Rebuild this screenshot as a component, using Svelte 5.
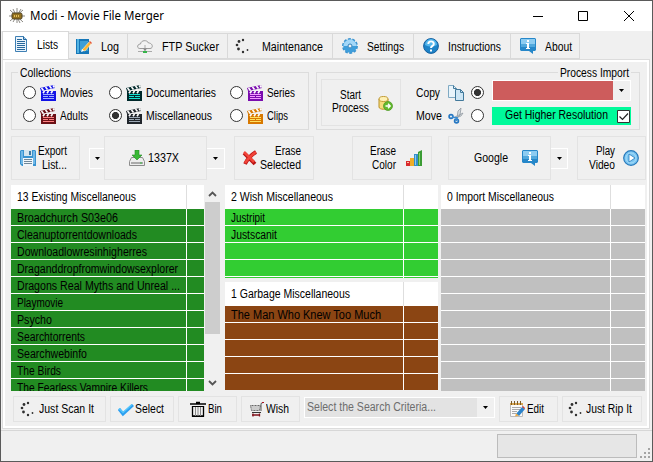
<script>
  const tabs = [
    ['Lists', 'doc', 21], ['Log', 'log', 18], ['FTP Sucker', 'cloud', 57], ['Maintenance', 'dots', 61],
    ['Settings', 'gear', 37], ['Instructions', 'help', 53], ['About', 'info', 27]
  ];
  const collections = [
    ['Movies', 33, '#1212e6', '#a0b0ff'], ['Documentaries', 70, '#00282a', '#14e0d4'], ['Series', 28, '#7a0cae', '#f59aff'],
    ['Adults', 28, '#6b1015', '#ff8080'], ['Miscellaneous', 66, '#20252b', '#9ca8b5'], ['Clips', 21, '#d87800', '#ffe060']
  ];
  const existing = [
    ['Broadchurch S03e06', 101], ['Cleanuptorrentdownloads', 120], ['Downloadlowresinhigherres', 130],
    ['Draganddropfromwindowsexplorer', 161], ['Dragons Real Myths and Unreal ...', 163], ['Playmovie', 46],
    ['Psycho', 35], ['Searchtorrents', 68], ['Searchwebinfo', 70], ['The Birds', 44], ['The Fearless Vampire Killers', 131]
  ];
  const pad = (rows, n) => [...rows, ...Array(n - rows.length).fill(['', 0])];
  const wish = pad([['Justripit', 34], ['Justscanit', 46]], 5);
  const garbage = pad([['The Man Who Knew Too Much', 150]], 5);
  const incoming = pad([], 11);

  // Condenses a label horizontally so that it fills its given width.
  function fit(node, w) {
    const natural = node.getBoundingClientRect().width;
    if (natural) node.style.transform = `scaleX(${w / natural})`;
  }
</script>

{#snippet T(text, w)}
  <span class="t" style="width:{w}px"><span class="ti" use:fit={w}>{text}</span></span>
{/snippet}

{#snippet clapper(dark, light)}
  <svg class="ic" width="16" height="16" viewBox="0 0 16 16">
    <path d="M1 6h15v10H1z" fill={dark} />
    <path d="M0 3l14-3 1 3L1 6z" fill={dark} />
    <path d="M1.500 3l2 2.500M5.500 2l2 2.500M9.500 1l2 2.500M13 .5l1.500 2" stroke="#fff" stroke-width="1.600" />
    <path d="M3 8.300l1.500-2.300M7 8.300l1.500-2.300M11 8.300l1.500-2.300" stroke="#fff" stroke-width="1.600" />
    <path d="M3 9.500h11M3 11.500h5M9 11.500h5M3 13.500h11" stroke={light} />
  </svg>
{/snippet}

{#snippet icon(name)}
  <svg class="ic" width="16" height="16" viewBox="0 0 16 16" fill="none">
    {#if name === 'app'}
      <path d="M8 0v15M1 2l13 12M14 2L1 13M0 8h16M4 1l7 14M12 1L4 14" stroke="#8b8983" />
      <rect x="3" y="5" width="10" height="6" rx="1.500" fill="#92701f" stroke="#4d4023" />
      <path d="M5 8h6" stroke="#e3bf59" stroke-dasharray="1 1" stroke-width="2" />
    {:else if name === 'doc'}
      <path d="M2.500.5h8l3 3v12h-11z" fill="#eaf4fc" stroke="#3f80b4" />
      <path d="M10.500.5v3h3" fill="#9fc9e9" stroke="#23659c" />
      <path d="M4 3.500h5M4 5.500h8M4 7.500h8M4 9.500h8M4 11.500h8M4 13.500h8" stroke="#28689b" />
    {:else if name === 'log'}
      <path d="M0 1h13v15H0z" fill="#1677b8" /><path d="M1 1h2v14H1z" fill="#54b3e2" />
      <path d="M4 3h8v10H4z" fill="#3d9fd6" />
      <path d="M6 12l7-8 2 2-6 7z" fill="#ffb52e" stroke="#fff1c4" stroke-width=".6" /><path d="M13 4l1-1 2 2-1 1z" fill="#e65536" /><path d="M5 14l1-3 2 2z" fill="#fff" />
    {:else if name === 'cloud'}
      <path d="M3 10.500C-.5 10.500 0 6 3.500 6 4 2 10 1.500 11.500 5 16 5 16.500 10.500 13 10.500z" fill="#f2f2f2" stroke="#9b9b9b" />
      <path d="M8 7v6M1 13.500h14" stroke="#aaa" /><path d="M6 10.500h4L8 13z" fill="#858585" /><path d="M6 13h4v2H6z" fill="#36b44a" />
    {:else if name === 'dots'}
      <g fill="#303030"><circle cx="8" cy="2" r="1.200" /><circle cx="4" cy="3.500" r="1.400" /><circle cx="2" cy="7" r="1.300" /><circle cx="3.500" cy="11" r="1.400" /><circle cx="8" cy="14" r="1.200" /><circle cx="12.500" cy="12" r=".9" /></g>
    {:else if name === 'gear'}
      <circle cx="8" cy="8" r="6.700" stroke="#3c93cf" stroke-width="2.500" stroke-dasharray="2.700 1.500" />
      <circle cx="8" cy="8" r="4.500" stroke="#3f9edb" stroke-width="4.500" /><path d="M1.500 8a6.500 6.500 0 0 1 13 0h-4.500a2 2 0 0 0-4 0z" fill="#a3d7f8" />
      <circle cx="8" cy="8" r="2" fill="#f0f0f0" stroke="#2b7fbb" />
    {:else if name === 'help'}
      <circle cx="8" cy="8" r="7.400" fill="#1d83c8" stroke="#155f9e" /><path d="M2 7a6 6 0 0 1 12 0q-6 3-12 0" fill="#55b7ed" />
      <path d="M5.300 6c0-3.500 5.500-3.500 5.500 0C10.800 8 8 7.800 8 10" stroke="#fff" stroke-width="1.900" /><path d="M7 11.500h2v2H7z" fill="#fff" />
    {:else if name === 'info'}
      <path d="M1 0h14l1 1v11l-1 1h-2v3l-4-3H1l-1-1V1z" fill="#2687c9" /><path d="M1 1h14v5H1z" fill="#8dccf1" /><path d="M1 6h14v3H1z" fill="#51a8dc" />
      <path d="M7 2h2v2H7zM6 5h3v5h1v1H6v-1h1V6H6z" fill="#fff" />
    {:else if name === 'db'}
      <path d="M2 4v8c0 3 9 3 9 0V4" fill="#f5dc7c" stroke="#bb9125" /><ellipse cx="6.500" cy="4" rx="4.500" ry="2.500" fill="#fff1b4" stroke="#c19a34" />
      <circle cx="11" cy="11" r="4.500" fill="#62b92e" stroke="#4a9520" stroke-width=".7" /><path d="M8.500 11h4M11 8.800l2.200 2.200-2.200 2.200" stroke="#fff" stroke-width="1.300" />
    {:else if name === 'copy'}
      <path d="M.5 .5h5l3 3v9h-8z" fill="#e8f4fb" stroke="#80aac3" /><path d="M7.500 4.500h5l3 3v8h-8z" fill="#cde6f5" stroke="#42799b" />
      <path d="M12.500 4.500v3h3M5.500 .5v3h3" stroke="#42799b" />
    {:else if name === 'cut'}
      <path d="M9 10l1-7 3-3-1 7zM7 9l8-4-2 3-5 2z" fill="#d8dce0" stroke="#929ba2" stroke-width=".8" />
      <circle cx="3" cy="8.500" r="1.900" stroke="#2677c2" stroke-width="1.700" /><circle cx="8.500" cy="13" r="1.900" stroke="#2677c2" stroke-width="1.700" /><path d="M4 9l5 1-1 3" stroke="#3b8bd0" stroke-width="1.700" />
    {:else if name === 'save'}
      <path d="M0 1l1-1h14l1 1v15H2l-2-2z" fill="#3993d0" /><path d="M1 1h2v13H1zM13 1h2v13h-2z" fill="#72b9e8" /><path d="M4 0h8v6H4z" fill="#d5e5ee" /><path d="M9 1h2v4H9z" fill="#3d78a2" />
      <path d="M3 8h10v8H3z" fill="#f1f6fa" /><path d="M4 9.500h8M4 11.500h8M4 13.500h8" stroke="#70889a" />
    {:else if name === 'down'}
      <path d="M2.500 7.500h11l2 4v4H.5v-4z" fill="#ededed" stroke="#8c8c8c" /><path d="M2 13h12" stroke="#aaa" stroke-width="2" /><path d="M11 13h2" stroke="#36bd3f" />
      <path d="M6 0h4v5h3l-5 5-5-5h3z" fill="#39b935" stroke="#238823" stroke-width=".6" />
    {:else if name === 'erase'}
      <path d="M2 3l11 11M14 2C9 5 5 10 3 14" stroke="#b91515" stroke-width="3.800" /><path d="M2 2l10 10M14 2C9 5 5 10 3 13" stroke="#f24439" stroke-width="2.500" />
    {:else if name === 'bars'}
      <path d="M0 11h4v5H0z" fill="#d9292c" /><path d="M1 12h2v1H1z" fill="#ffc0a0" /><path d="M4 8h4v8H4z" fill="#efad27" /><path d="M8 4h4v12H8z" fill="#348fc9" /><path d="M9 5h1v10H9z" fill="#8acbef" /><path d="M12 2l4-2v16h-4z" fill="#3b9c34" /><path d="M13 3h1v12h-1z" fill="#8ed477" />
    {:else if name === 'play'}
      <circle cx="8" cy="8" r="7.300" fill="#7cc6f2" stroke="#2679bb" stroke-width="1.200" /><circle cx="8" cy="8" r="5" stroke="#a6dcf8" /><path d="M6 4l6 4-6 4z" fill="#fff" stroke="#247bbd" stroke-width=".8" />
    {:else if name === 'check'}
      <path d="M1 8l4 5 10-9" stroke="#2c9ff0" stroke-width="3" /><path d="M1 7.500l4 4 9-8" stroke="#55c5fb" stroke-width="1.500" />
    {:else if name === 'bin'}
      <path d="M6 1.500h4M0 3h16" stroke="#000" stroke-width="1.400" /><path d="M2.500 5v10h11V5" stroke="#000" stroke-width="1.300" /><path d="M2 5.500h12M2 15.500h12" stroke="#000" /><path d="M5.500 6v9M8 6v9M10.500 6v9" stroke="#888" />
    {:else if name === 'cart'}
      <path d="M1.500 4.500h10l-1 5h-8z" fill="#ccc" stroke="#666" stroke-dasharray="1 .5" /><path d="M12 10V2.500l2-1" stroke="#555" /><path d="M3 11.500h9" stroke="#333" /><path d="M13 1h2v1h-2z" fill="#a12" /><path d="M3 14h8M4 12.500v3M10.500 12.500v3" stroke="#81131d" stroke-width="1.300" />
    {:else if name === 'edit'}
      <path d="M1.500 2.500h12v13h-12z" fill="#fafafa" stroke="#bbb" /><path d="M1 3h13" stroke="#d9a650" stroke-width="2" /><path d="M2.500 0v4M5.500 0v4M8.500 0v4M11.500 0v4" stroke="#7c5a25" /><path d="M3 6.500h9M3 8.500h8M3 10.500h5M3 12.500h4" stroke="#aaa" />
      <path d="M7 13l6-7 3 2-6 7z" fill="#2b83cb" /><path d="M13 6l1-1 2 2v1z" fill="#d93324" /><path d="M6 15.500l1-3 3 2z" fill="#efaa41" />
    {/if}
  </svg>
{/snippet}

{#snippet arrow()}<svg class="arr" width="5" height="3" viewBox="0 0 5 3"><path d="M0 0h5L2.500 3z" /></svg>{/snippet}

{#snippet table(title, w, rows, kind)}
  <div class="table {kind}">
    <div class="thead"><div class="c1">{@render T(title, w)}</div><div class="c2"></div></div>
    {#each rows as [name, tw]}
      <div class="tr"><div class="c1">{#if name}{@render T(name, tw)}{/if}</div><div class="c2"></div></div>
    {/each}
  </div>
{/snippet}

<div class="window">
  <header>
    {@render icon('app')}
    <span class="title">{@render T('Modi - Movie File Merger', 134)}</span>
    <svg class="caps" width="104" height="12" viewBox="0 0 104 12" fill="none" stroke="#000"><path d="M0 6.500h10M45.500 1.500h9v9h-9zM91 1l10 10M101 1L91 11" /></svg>
  </header>

  <nav>
    {#each tabs as [name, ic, w], i}
      <div class="tab tab{i}">{@render icon(ic)}{@render T(name, w)}</div>
    {/each}
  </nav>

  <main>
    <div class="groups">
      <fieldset class="coll">
        <legend>{@render T('Collections', 51)}</legend>
        <div class="radios">
          {#each collections as [name, w, dark, light]}
            <div class="opt"><i class="radio" class:on={name === 'Miscellaneous'}></i>{@render clapper(dark, light)}{@render T(name, w)}</div>
          {/each}
        </div>
      </fieldset>
      <fieldset class="proc">
        <legend>{@render T('Process Import', 69)}</legend>
        <div class="btn start"><div class="two mid">{@render T('Start', 21)}{@render T('Process', 37)}</div>{@render icon('db')}</div>
        <div class="modes">
          <div class="mode"><span class="ml">{@render T('Copy', 24)}</span>{@render icon('copy')}<i class="radio on"></i></div>
          <div class="mode"><span class="ml">{@render T('Move', 26)}</span>{@render icon('cut')}<i class="radio"></i></div>
        </div>
        <div class="picks">
          <div class="color"><div class="red"></div><div class="cd">{@render arrow()}</div></div>
          <div class="hires">{@render T('Get Higher Resolution', 103)}<svg width="13" height="13" viewBox="0 0 13 13"><path d="M.5.5h12v12H.5z" fill="#fff" stroke="#333" /><path d="M2.500 6.500l3 3 5.500-6" fill="none" stroke="#222" stroke-width="1.200" /></svg></div>
        </div>
      </fieldset>
    </div>

    <div class="tools">
      <div class="btn export">{@render icon('save')}<div class="two right">{@render T('Export', 29)}{@render T('List...', 25)}</div></div>
      <div class="dd d1">{@render arrow()}</div>
      <div class="btn site">{@render icon('down')}{@render T('1337X', 31)}</div>
      <div class="dd d2">{@render arrow()}</div>
      <div class="btn esel">{@render icon('erase')}<div class="two right">{@render T('Erase', 26)}{@render T('Selected', 41)}</div></div>
      <div class="btn ecol"><div class="two right">{@render T('Erase', 26)}{@render T('Color', 24)}</div>{@render icon('bars')}</div>
      <div class="btn goog">{@render T('Google', 34)}{@render icon('info')}</div>
      <div class="dd d3">{@render arrow()}</div>
      <div class="btn play"><div class="two right">{@render T('Play', 19)}{@render T('Video', 26)}</div>{@render icon('play')}</div>
    </div>

    <div class="lists">
      {@render table('13 Existing Miscellaneous', 119, existing, 'existing')}
      <div class="scroll">
        <svg width="9" height="6" viewBox="0 0 9 6"><path d="M1 5l3.500-3.500L8 5" /></svg>
        <div class="thumb"></div>
        <svg width="9" height="6" viewBox="0 0 9 6"><path d="M1 1l3.500 3.500L8 1" /></svg>
      </div>
      <div class="middle">
        {@render table('2 Wish Miscellaneous', 102, wish, 'wish')}
        {@render table('1 Garbage Miscellaneous', 119, garbage, 'garbage')}
      </div>
      {@render table('0 Import Miscellaneous', 107, incoming, 'incoming')}
    </div>

    <div class="actions">
      <div class="btn scan">{@render icon('dots')}{@render T('Just Scan It', 55)}</div>
      <div class="btn sel">{@render icon('check')}{@render T('Select', 29)}</div>
      <div class="btn bin">{@render icon('bin')}{@render T('Bin', 14)}</div>
      <div class="btn wishb">{@render icon('cart')}{@render T('Wish', 23)}</div>
      <div class="criteria"><div class="field">{@render T('Select the Search Criteria...', 129)}</div><div class="cd">{@render arrow()}</div></div>
      <div class="btn edit">{@render icon('edit')}{@render T('Edit', 17)}</div>
      <div class="btn rip">{@render icon('dots')}{@render T('Just Rip It', 46)}</div>
    </div>
  </main>

  <footer>
    <div class="progress"></div>
    <svg width="11" height="11" viewBox="0 0 11 11" fill="#a5a5a5"><path d="M8 0h2v2H8zM8 4h2v2H8zM8 8h2v2H8zM4 4h2v2H4zM4 8h2v2H4zM0 8h2v2H0z" /></svg>
  </footer>
</div>

<style>
  * { box-sizing: border-box; }
  .window { width: 653px; height: 462px; overflow: hidden; background: #f0f0f0; border: 1px solid #5a5a5a; font: 12px/14px "Liberation Sans", Arial, sans-serif; color: #000; display: flex; flex-direction: column; }
  .t { display: inline-block; flex: none; height: 14px; white-space: nowrap; text-align: left; }
  .ti { display: inline-block; transform-origin: 0 50%; }
  .ic, .arr, svg { flex: none; display: block; }
  header { height: 30px; flex: none; background: #fff; display: flex; align-items: center; padding-left: 8px; }
  .title { margin-left: 5px; font: 12px/14px "Noto Sans", "Open Sans", sans-serif; display: flex; }
  .caps { margin-left: auto; margin-right: 15px; margin-top: -1px; }

  nav { height: 28px; flex: none; display: flex; align-items: flex-end; padding-left: 1px; position: relative; z-index: 1; }
  nav .t { margin-top: 2px; }
  .tab { height: 26px; display: flex; align-items: center; border: 1px solid #d9d9d9; border-left: 0; padding-bottom: 1px; }
  .tab0 { width: 67px; height: 28px; background: #fff; border-left: 1px solid #d9d9d9; border-bottom: 0; padding-left: 10px; gap: 8px; padding-bottom: 3px; }
  .tab1 { width: 59px; padding-left: 7px; gap: 9px; }
  .tab2 { width: 100px; padding-left: 9px; gap: 9px; }
  .tab3 { width: 105px; padding-left: 7px; gap: 11px; }
  .tab4 { width: 81px; padding-left: 9px; gap: 9px; }
  .tab5 { width: 97px; padding-left: 9px; gap: 9px; }
  .tab6 { width: 69px; padding-left: 9px; gap: 9px; }

  main { width: 648px; height: 370px; margin-left: 1px; flex: none; border: 1px solid #dcdcdc; box-shadow: inset 0 0 0 2px #fff; display: flex; flex-direction: column; padding: 6px 0 0 8px; }
  .groups { display: flex; height: 64px; gap: 7px; flex: none; }
  fieldset { margin: 6px 0 0; padding: 0; min-width: 0; height: 58px; border: 1px solid #dcdcdc; display: flex; position: relative; }
  legend { position: absolute; top: -7px; background: #f0f0f0; display: flex; padding: 0 2px; }
  .coll { width: 298px; }
  .coll legend { left: 6px; }
  .radios { display: grid; grid-template-columns: 86px 121px 70px; grid-template-rows: 23px 23px; padding: 8px 0 0 11px; }
  .opt { display: flex; align-items: center; gap: 4px; }
  .radio { width: 13px; height: 13px; flex: none; border-radius: 50%; border: 1px solid #333; background: #fff; }
  .radio.on { background: radial-gradient(circle, #333 3.200px, #fff 3.900px); }
  .proc { width: 324px; padding-left: 4px; }
  .proc legend { right: 8px; }
  .btn { border: 1px solid #e3e3e3; background: #f0f0f0; display: flex; align-items: center; flex: none; }
  .two { display: flex; flex-direction: column; }
  .mid { align-items: center; }
  .right { align-items: flex-end; }
  .start { width: 80px; height: 47px; margin-top: 6px; padding-left: 10px; gap: 8px; }
  .start .two { line-height: 13px; padding-bottom: 2px; }
  .start .t { height: 13px; }
  .modes { width: 69px; margin-left: 15px; padding-top: 8px; }
  .mode { display: flex; align-items: center; height: 23px; }
  .ml { width: 32px; display: flex; }
  .mode .radio { margin-left: 7px; }
  .picks { width: 140px; margin-left: 7px; padding-top: 7px; }
  .color { height: 21px; border: 1px solid #fff; display: flex; width: 139px; }
  .red { flex: 1; background: #cd5c5c; }
  .cd { width: 17px; display: flex; align-items: center; justify-content: center; background: #f0f0f0; }
  .hires { margin-top: 6px; width: 139px; height: 18px; background: #00fa9a; display: flex; align-items: center; padding-left: 13px; gap: 9px; }
  .hires .t { margin-top: -2px; }

  .tools { margin-top: 6px; height: 44px; display: flex; align-items: center; flex: none; }
  .tools .btn { height: 44px; }
  .dd { height: 21px; border: 1px solid #fff; display: flex; align-items: center; justify-content: center; flex: none; }
  .export { width: 69px; padding-left: 8px; gap: 2px; }
  .d1 { width: 15px; margin-left: 9px; border-right: 0; }
  .site { width: 103px; padding-left: 24px; gap: 3px; }
  .d2 { width: 18px; border-left: 0; }
  .esel { width: 80px; margin-left: 9px; padding-left: 7px; gap: 2px; }
  .ecol { width: 80px; margin-left: 38px; padding-left: 17px; gap: 10px; }
  .goog { width: 103px; margin-left: 16px; padding-left: 25px; gap: 14px; }
  .d3 { width: 17px; border-left: 0; }
  .play { width: 69px; margin-left: 9px; padding-left: 11px; gap: 8px; }

  .lists { margin-top: 5px; height: 206px; display: flex; flex: none; }
  .table { overflow: hidden; flex: none; }
  .thead, .tr { display: flex; }
  .thead { height: 24px; background: #fff; }
  .c1 { flex: 1; display: flex; align-items: center; padding-left: 6px; border-right: 1px solid #fff; min-width: 0; }
  .thead .c1 { border-color: #dedede; }
  .c2 { flex: none; }
  .tr { height: 17px; border-bottom: 1px solid #fff; }
  .tr .c1 { padding-top: 2px; }
  .existing { width: 193px; height: 206px; }
  .existing .c2 { width: 17px; }
  .existing .tr { background: #228b22; }
  .wish, .garbage { width: 213px; }
  .wish { height: 93px; }
  .garbage { height: 108px; margin-top: 4px; }
  .wish .c2, .garbage .c2 { width: 34px; }
  .wish .tr { background: #32cd32; }
  .garbage .tr { background: #8b4513; }
  .incoming { width: 204px; height: 206px; margin-left: 3px; }
  .incoming .c2 { width: 34px; }
  .incoming .tr { background: #c0c0c0; }
  .scroll { width: 15px; margin: 0 5px 0 1px; display: flex; flex-direction: column; align-items: center; padding: 6px 0 5px; }
  .scroll path { fill: none; stroke: #555; stroke-width: 1.800; }
  .thumb { width: 15px; height: 132px; margin: 5px 0 auto; background: #cdcdcd; }

  .actions { margin-top: 5px; padding-left: 2px; height: 26px; display: flex; gap: 4px; flex: none; }
  .actions .btn { height: 26px; }
  .scan { width: 93px; padding-left: 6px; gap: 3px; }
  .sel { width: 64px; padding-left: 7px; gap: 1px; }
  .bin { width: 59px; padding-left: 11px; gap: 2px; }
  .wishb { width: 59px; padding-left: 7px; gap: 1px; }
  .edit { width: 59px; padding-left: 9px; gap: 2px; }
  .rip { width: 80px; padding-left: 5px; gap: 2px; }
  .criteria { width: 191px; height: 21px; margin-top: 1px; border: 1px solid #fff; display: flex; }
  .field { flex: 1; background: #e3e3e3; color: #6d6d6d; display: flex; align-items: center; padding-left: 2px; }
  .field .t { margin-top: -2px; }

  footer { height: 31px; margin-top: 1px; flex: none; border-top: 1px solid #d7d7d7; display: flex; justify-content: flex-end; padding: 3px 1px 0 0; }
  .progress { width: 140px; height: 24px; background: #e6e6e6; border: 1px solid #bcbcbc; }
  footer svg { margin: 14px 0 0 3px; }
</style>
